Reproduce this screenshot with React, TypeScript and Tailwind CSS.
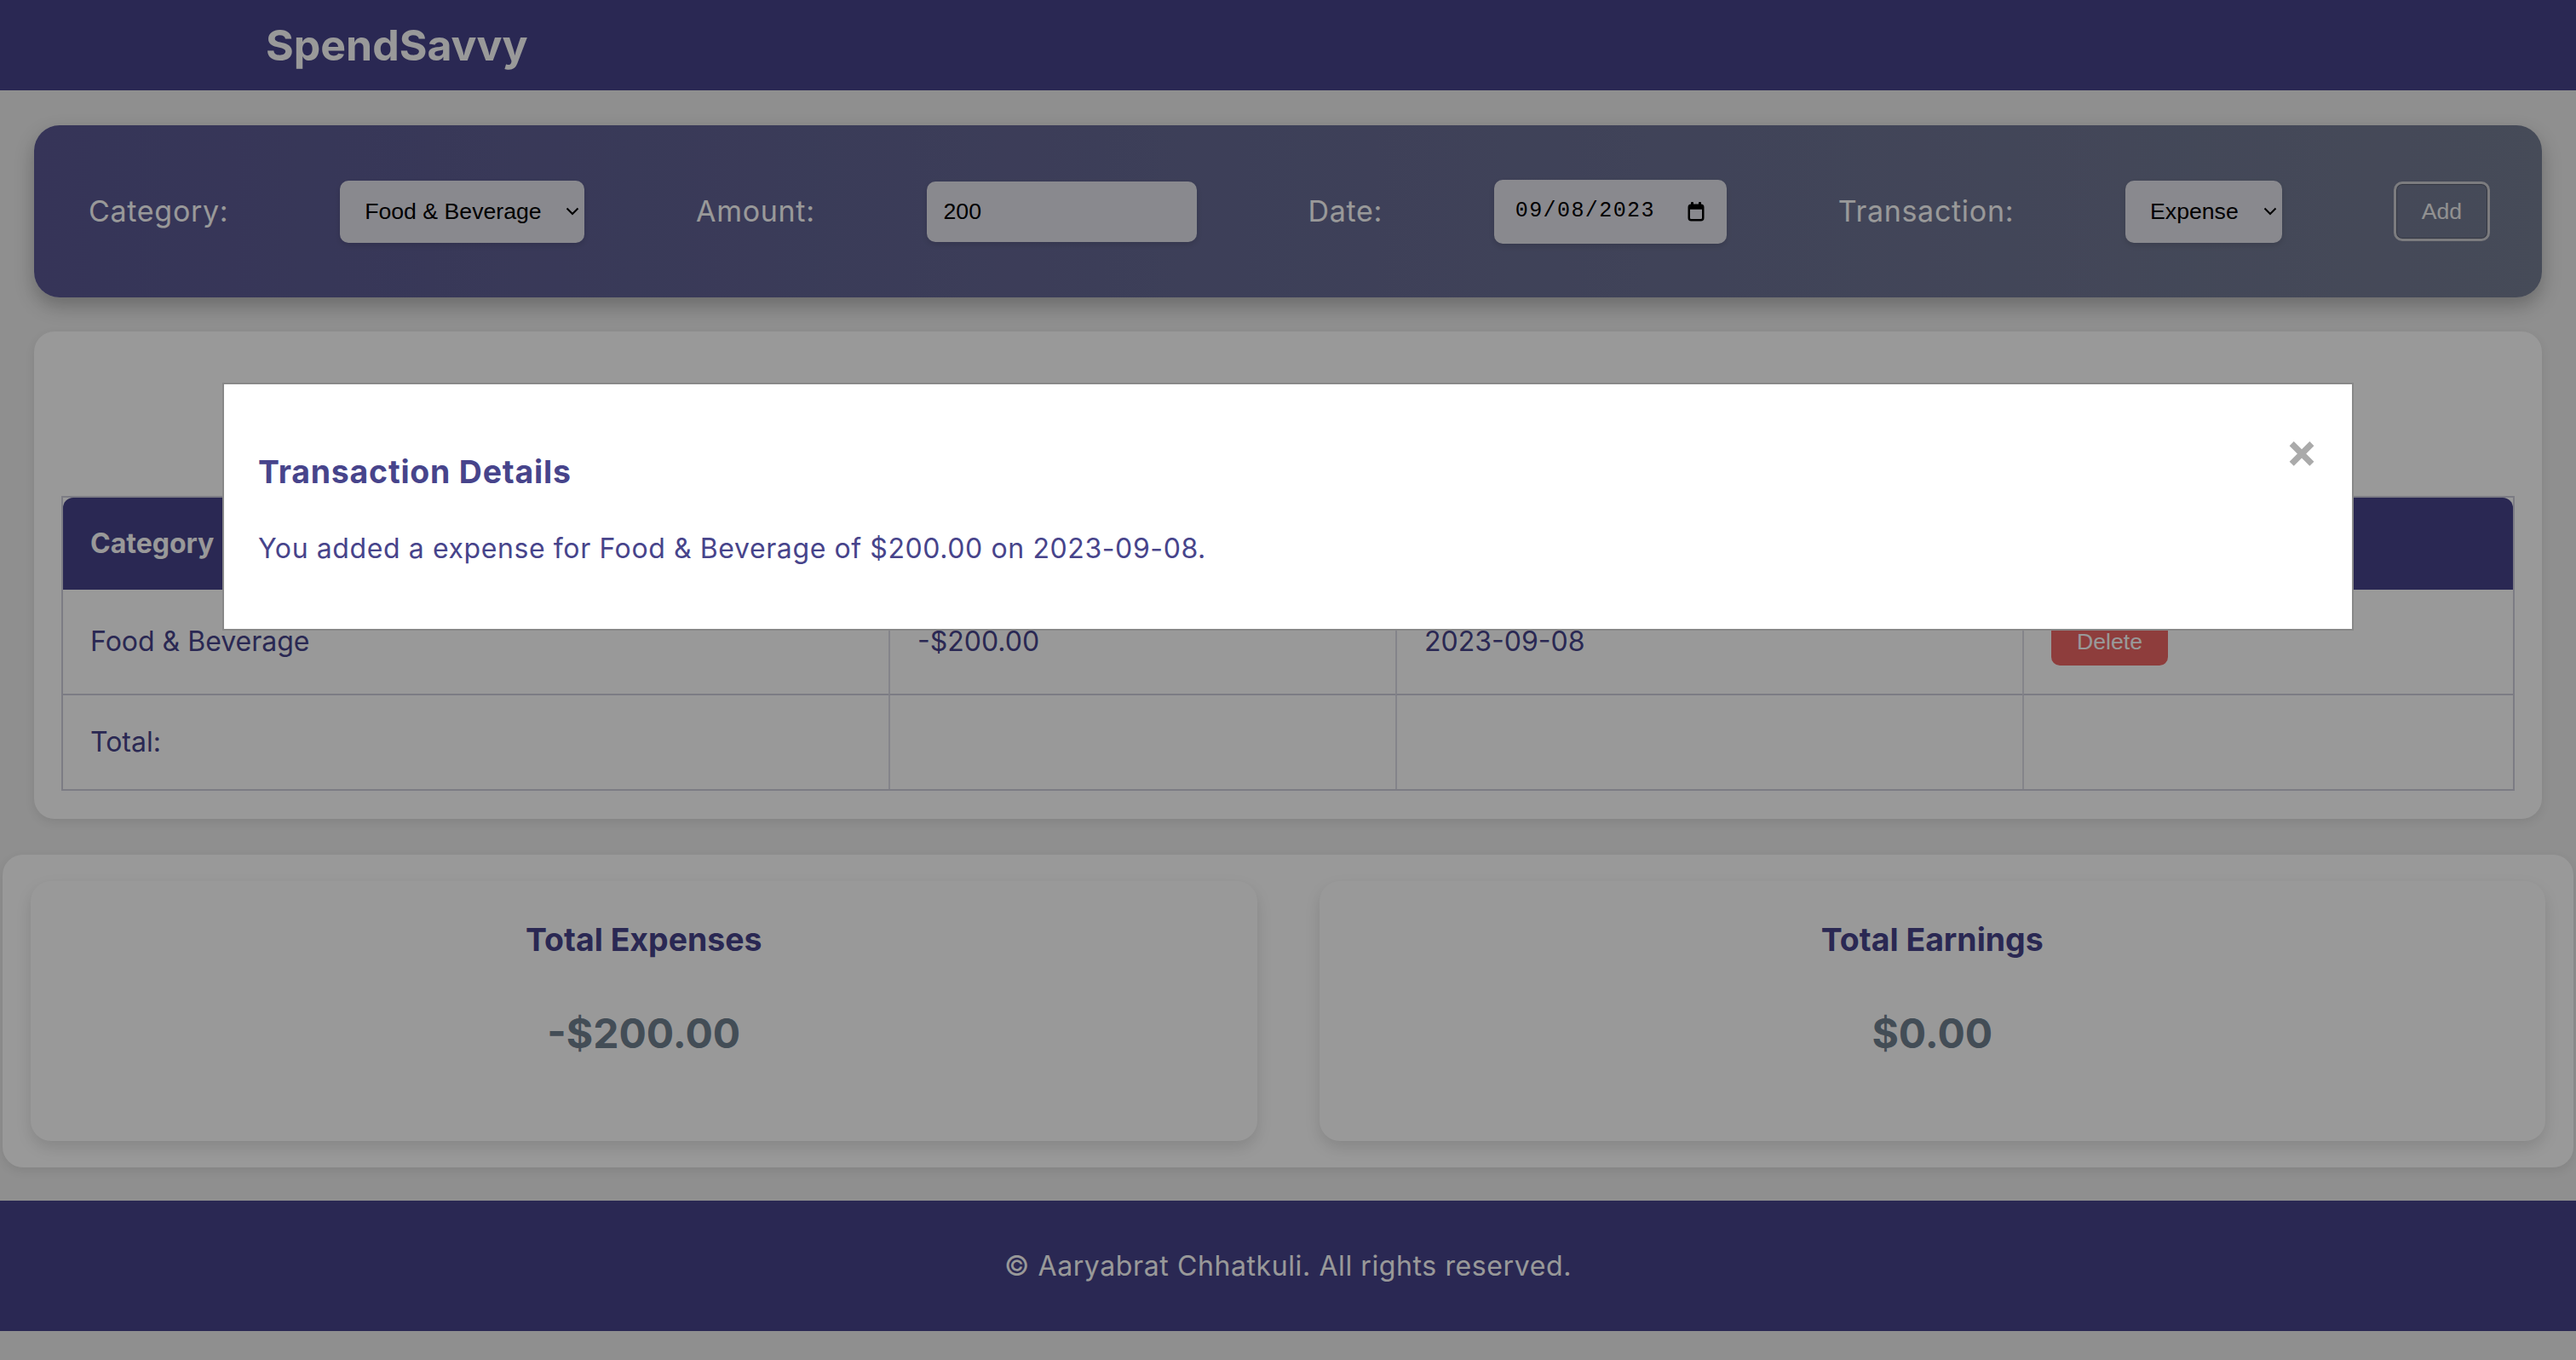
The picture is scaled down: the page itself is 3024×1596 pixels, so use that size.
import React from 'react';

const Chevron: React.FC = () => (
  <svg width="16" height="10" viewBox="0 0 16 10" fill="none" stroke="#000" strokeWidth="2">
    <path d="M1.5 1.5 L8 8 L14.5 1.5" />
  </svg>
);

const CalendarIcon: React.FC = () => (
  <svg width="20" height="24" viewBox="0 0 20 24">
    <rect x="1.75" y="4.75" width="16.5" height="17.5" rx="2.5" fill="none" stroke="#000" strokeWidth="2.5" />
    <rect x="1.75" y="4.75" width="16.5" height="5" fill="#000" />
    <rect x="4" y="1" width="3" height="5" rx="1" fill="#000" />
    <rect x="13" y="1" width="3" height="5" rx="1" fill="#000" />
  </svg>
);

const FieldLabel: React.FC<{ children: React.ReactNode }> = ({ children }) => (
  <label className="text-[34px] leading-[48px] tracking-[0.7px] text-white">{children}</label>
);

const App: React.FC = () => {
  return (
    <div className="relative min-h-screen bg-[#eeeeee] font-['Inter',sans-serif] text-[#47448b]">
      <header className="h-[106px] bg-[#47448b] flex items-center pl-[312px]">
        <h1 className="text-[50px] leading-[64px] font-bold text-white">SpendSavvy</h1>
      </header>

      {/* add form */}
      <div className="mx-[40px] mt-[41px] h-[202px] rounded-[30px] bg-linear-to-r from-[#5a5893] to-[#757d93] shadow-[0_10px_22px_rgba(0,0,0,0.25)] flex items-center justify-between pl-[64px] pr-[61px]">
        <FieldLabel>Category:</FieldLabel>
        <div className="w-[287px] h-[73px] rounded-[10px] bg-[#e4e4ed] shadow-[0_3px_6px_rgba(0,0,0,0.12)] flex items-center justify-between pl-[29px] pr-[6px] font-['Liberation_Sans',sans-serif] text-[26.67px] text-black">
          <span>Food &amp; Beverage</span>
          <Chevron />
        </div>
        <FieldLabel>Amount:</FieldLabel>
        <div className="w-[317px] h-[71px] rounded-[10px] bg-[#e4e4ed] shadow-[0_3px_6px_rgba(0,0,0,0.12)] flex items-center pl-[20px] font-['Liberation_Sans',sans-serif] text-[26.67px] text-black">
          200
        </div>
        <FieldLabel>Date:</FieldLabel>
        <div className="w-[273px] h-[75px] rounded-[10px] bg-[#e4e4ed] shadow-[0_3px_6px_rgba(0,0,0,0.12)] flex items-center justify-between pl-[25px] pr-[26px] font-['Liberation_Mono',monospace] text-[25px] tracking-[1.4px] text-black">
          <span>09/08/2023</span>
          <CalendarIcon />
        </div>
        <FieldLabel>Transaction:</FieldLabel>
        <div className="w-[184px] h-[73px] rounded-[10px] bg-[#e4e4ed] shadow-[0_3px_6px_rgba(0,0,0,0.12)] flex items-center justify-between pl-[29px] pr-[6px] font-['Liberation_Sans',sans-serif] text-[26.67px] text-black">
          <span>Expense</span>
          <Chevron />
        </div>
        <button className="w-[113px] h-[70px] rounded-[10px] border-[3px] border-[#cfcfd4] bg-transparent shadow-[inset_0_0_0_1px_rgba(0,0,0,0.25)] font-['Liberation_Sans',sans-serif] text-[26.67px] text-[#f2f2f2]">
          Add
        </button>
      </div>

      {/* transactions table */}
      <div className="mx-[40px] mt-[40px] rounded-[24px] bg-white shadow-[0_4px_12px_rgba(0,0,0,0.08)] px-[32px] pt-[193px] pb-[33px]">
        <table className="w-full border-separate border-spacing-0 border-2 border-[#cfcfdc] text-left text-[32px]">
          <thead>
            <tr>
              <th className="w-[969px] h-[108px] px-[32px] bg-[#47448b] text-white font-bold rounded-tl-[12px]">Category</th>
              <th className="w-[595px] px-[32px] bg-[#47448b] text-white font-bold">Amount</th>
              <th className="w-[736px] px-[32px] bg-[#47448b] text-white font-bold">Date</th>
              <th className="px-[32px] bg-[#47448b] text-white font-bold rounded-tr-[12px]">Action</th>
            </tr>
          </thead>
          <tbody>
            <tr>
              <td className="h-[124px] px-[32px] border-b-2 border-[#cfcfdc]">Food &amp; Beverage</td>
              <td className="px-[32px] border-b-2 border-l-2 border-b-[#cfcfdc] border-l-[#dddde6]">-$200.00</td>
              <td className="px-[32px] border-b-2 border-l-2 border-b-[#cfcfdc] border-l-[#dddde6]">2023-09-08</td>
              <td className="px-[32px] border-b-2 border-l-2 border-b-[#cfcfdc] border-l-[#dddde6]">
                <button className="h-[56px] px-[30px] rounded-[10px] bg-[#ed6764] font-['Liberation_Sans',sans-serif] text-[26.67px] text-white">
                  Delete
                </button>
              </td>
            </tr>
            <tr>
              <td className="h-[110px] px-[32px]">Total:</td>
              <td className="px-[32px] border-l-2 border-[#dddde6]"></td>
              <td className="px-[32px] border-l-2 border-[#dddde6]"></td>
              <td className="px-[32px] border-l-2 border-[#dddde6]"></td>
            </tr>
          </tbody>
        </table>
      </div>

      {/* totals */}
      <div className="mx-[3px] mt-[42px] rounded-[24px] bg-white shadow-[0_4px_12px_rgba(0,0,0,0.08)] px-[33px] py-[31px] grid grid-cols-2 gap-[73px]">
        <div className="h-[305px] rounded-[24px] bg-white shadow-[0_8px_18px_rgba(0,0,0,0.12)] flex flex-col items-center pt-[41px]">
          <h3 className="text-[37.44px] leading-[56px] font-bold">Total Expenses</h3>
          <p className="mt-[46px] text-[48px] leading-[72px] font-bold text-[#708090]">-$200.00</p>
        </div>
        <div className="h-[305px] rounded-[24px] bg-white shadow-[0_8px_18px_rgba(0,0,0,0.12)] flex flex-col items-center pt-[41px]">
          <h3 className="text-[37.44px] leading-[56px] font-bold">Total Earnings</h3>
          <p className="mt-[46px] text-[48px] leading-[72px] font-bold text-[#708090]">$0.00</p>
        </div>
      </div>

      <footer className="mt-[39px] h-[153px] bg-[#47448b] flex items-center justify-center">
        <p className="text-[32px] leading-[48px] tracking-[0.6px] text-white">© Aaryabrat Chhatkuli. All rights reserved.</p>
      </footer>
      <div className="h-[36px]" />

      {/* transaction details modal */}
      <div className="fixed inset-0 z-10 bg-black/40">
        <div className="mx-auto mt-[449px] w-[2502px] border-2 border-[#888888] bg-white p-[40px]">
          <span className="float-right mt-[6px] text-[56px] leading-[64px] font-bold text-[#aaaaaa]">×</span>
          <h3 className="mt-[35px] text-[37.44px] leading-[56px] tracking-[0.8px] font-bold text-[#47448b]">Transaction Details</h3>
          <p className="mt-[38px] mb-[30px] text-[32px] leading-[48px] tracking-[0.6px] text-[#47448b]">
            You added a expense for Food &amp; Beverage of $200.00 on 2023-09-08.
          </p>
        </div>
      </div>
    </div>
  );
};

export default App;
